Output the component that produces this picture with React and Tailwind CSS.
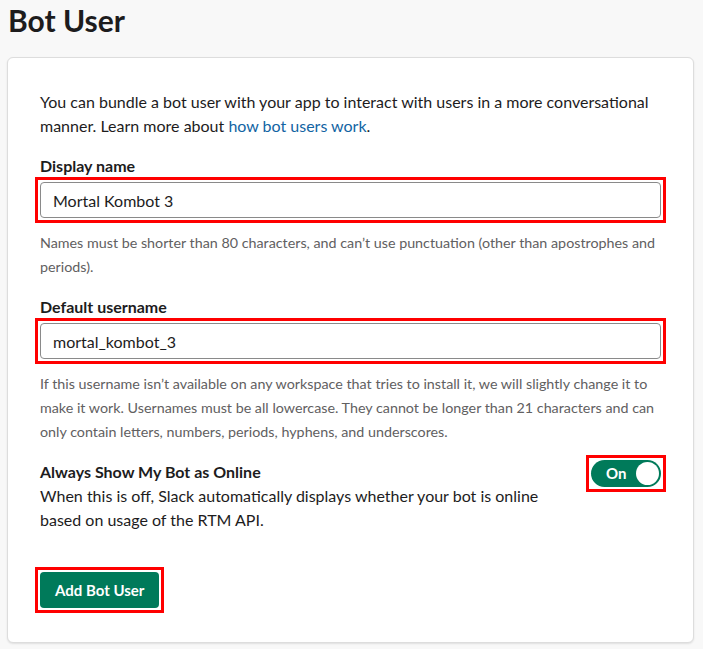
const Highlight = ({ children, className = "" }) => (
  <div className={`border-[3px] border-[#ff0000] p-[2px] ${className}`}>{children}</div>
)

const Field = ({ label, value, help }) => (
  <div>
    <label className="block text-[16px] leading-[22px] font-bold text-[#1d1c1d]">{label}</label>
    <Highlight className="-mx-[5px]">
      <input
        type="text"
        readOnly
        value={value}
        className="w-full h-[36px] px-[12px] border border-[#8a8a8a] rounded-[4px] text-[16px] text-[#1d1c1d] outline-none bg-white"
      />
    </Highlight>
    <p className="mt-[8px] text-[14.3px] leading-[24px] text-[#616061]">{help}</p>
  </div>
)

export default function App() {
  return (
    <div className="min-h-[649px] bg-[#f8f8f8] font-['Lato','Liberation_Sans',sans-serif] text-[#1d1c1d]">
      <h1 className="px-[8px] text-[30px] leading-[40px] font-bold text-[#1d1c1d]">Bot User</h1>

      <div className="mt-[17px] ml-[7px] mr-[9px] bg-white border border-[#dddddd] rounded-[6px] shadow-[0_1px_2px_rgba(0,0,0,0.1)] px-[32px] pt-[32px] pb-[29px]">
        <p className="text-[16px] leading-[24px]">
          You can bundle a bot user with your app to interact with users in a more conversational
          manner. Learn more about <a className="text-[#1264a3]">how bot users work</a>.
        </p>

        <div className="mt-[17px]">
          <Field
            label="Display name"
            value="Mortal Kombot 3"
            help="Names must be shorter than 80 characters, and can’t use punctuation (other than apostrophes and periods)."
          />
        </div>

        <div className="mt-[17px]">
          <Field
            label="Default username"
            value="mortal_kombot_3"
            help="If this username isn’t available on any workspace that tries to install it, we will slightly change it to make it work. Usernames must be all lowercase. They cannot be longer than 21 characters and can only contain letters, numbers, periods, hyphens, and underscores."
          />
        </div>

        <div className="mt-[16px] flex items-start justify-between">
          <div className="w-[510px] text-[16px] leading-[24px]">
            <div className="font-bold">Always Show My Bot as Online</div>
            <div>When this is off, Slack automatically displays whether your bot is online based on usage of the RTM API.</div>
          </div>
          <Highlight className="-mt-[5px] -mr-[5px]">
            <button className="flex items-center w-[70px] h-[27px] rounded-full bg-[#007a5a] pl-[15px] pr-[2px]">
              <span className="text-white text-[15px] font-bold">On</span>
              <span className="ml-auto w-[23px] h-[23px] rounded-full bg-white"></span>
            </button>
          </Highlight>
        </div>

        <div className="mt-[35px] flex">
          <Highlight className="-ml-[5px]">
            <button className="h-[36px] px-[15px] rounded-[4px] bg-[#007a5a] text-white text-[15px] font-bold">
              Add Bot User
            </button>
          </Highlight>
        </div>
      </div>
    </div>
  )
}
